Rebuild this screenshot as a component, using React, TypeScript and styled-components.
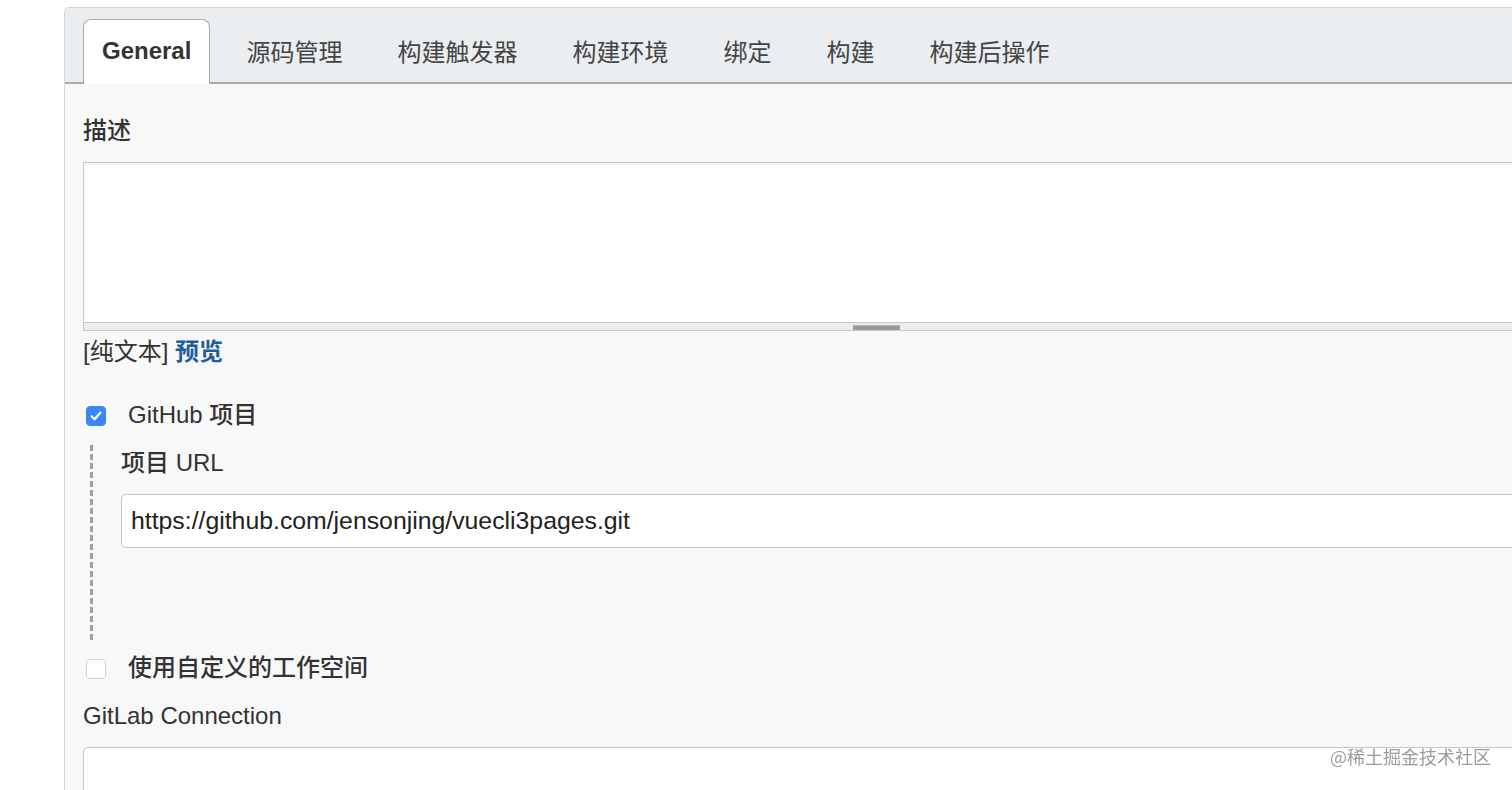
import styled, { createGlobalStyle } from "styled-components";

const GlobalStyle = createGlobalStyle`
    html, body {
        margin: 0;
        padding: 0;
        background: #ffffff;
        overflow: hidden;
    }
    body {
        font-family: "Liberation Sans", "Noto Sans CJK SC", sans-serif;
        color: #333;
    }
`;

const Page = styled.div`
    padding: 7px 0 0 64px;
    height: 790px;
    box-sizing: border-box;
`;

const Panel = styled.div`
    width: 1700px;
    height: 100%;
    background: #f8f8f9;
    border-left: 1px solid #d4d6d8;
    border-top: 1px solid #d4d6d8;
    border-radius: 5px 0 0 0;
    box-sizing: border-box;
    overflow: hidden;
`;

const TabBar = styled.div`
    display: flex;
    align-items: flex-end;
    height: 76px;
    padding-left: 18px;
    background: #eaeef1;
    border-bottom: 2px solid #a6abaf;
    box-sizing: border-box;
`;

const Tab = styled.div<{ $active?: boolean }>`
    display: flex;
    align-items: center;
    height: 65px;
    padding: 0 18px 3px;
    margin-right: 17px;
    margin-bottom: -2px;
    box-sizing: border-box;
    font-size: 24px;
    color: ${(p) => (p.$active ? "#333" : "#444")};
    font-weight: ${(p) => (p.$active ? 700 : 400)};
    background: ${(p) => (p.$active ? "#ffffff" : "transparent")};
    border: 1.5px solid ${(p) => (p.$active ? "#a6abaf" : "transparent")};
    border-bottom: none;
    border-radius: 8px 8px 0 0;
`;

const Content = styled.div`
    padding: 32px 0 0 18px;
`;

const Label = styled.div<{ $top?: number }>`
    font-size: 24px;
    line-height: 30px;
    font-weight: 500;
    color: #333;
    margin-top: ${(p) => p.$top ?? 0}px;
`;

const TextArea = styled.div`
    width: 1586px;
    height: 161px;
    margin-top: 16px;
    background: #fff;
    border: 1px solid #c6c8ca;
    box-shadow: inset 0 2px 2px rgba(0, 0, 0, 0.06);
    box-sizing: border-box;
`;

const Grippie = styled.div`
    width: 1586px;
    height: 8px;
    background: #ececec;
    border: 1px solid #c8c8c8;
    border-top: none;
    box-sizing: border-box;
    display: flex;
    justify-content: center;
    align-items: flex-start;
`;

const Grip = styled.div`
    width: 47px;
    height: 4px;
    margin-top: 2px;
    background: #9a9a9a;
    border-top: 1px solid #b5b5b5;
`;

const Hint = styled.div`
    margin-top: 6px;
    font-size: 24px;
    line-height: 30px;
    color: #333;
`;

const Link = styled.a`
    color: #1f5f9b;
    font-weight: 700;
    text-decoration: none;
`;

const CheckRow = styled.div<{ $top: number }>`
    display: flex;
    align-items: center;
    gap: 22px;
    height: 30px;
    margin-top: ${(p) => p.$top}px;
    padding-left: 3px;
    font-size: 24px;
    font-weight: 500;
    line-height: 30px;
    color: #333;
`;

const Box = styled.span<{ $checked?: boolean }>`
    display: inline-flex;
    align-items: center;
    justify-content: center;
    width: 20px;
    height: 20px;
    margin-top: 2px;
    border-radius: 4px;
    box-sizing: border-box;
    background: ${(p) => (p.$checked ? "#3a86f5" : "#ffffff")};
    border: 1px solid ${(p) => (p.$checked ? "#3a86f5" : "#cfd1d3")};
`;

const Nested = styled.div`
    margin: 15px 0 0 7px;
    padding: 3px 0 92px 28px;
    border-left: 3px dashed #a0a0a0;
`;

const Input = styled.div<{ $top?: number; $height: number }>`
    display: flex;
    align-items: center;
    width: 1600px;
    height: ${(p) => p.$height}px;
    margin-top: ${(p) => p.$top ?? 16}px;
    padding-left: 9px;
    background: #fff;
    border: 1px solid #c4c6c8;
    border-radius: 5px;
    box-sizing: border-box;
    font-size: 24.8px;
    color: #222;
`;

const BigBox = styled(Input)`
    align-items: flex-start;
`;

const Watermark = styled.div`
    position: fixed;
    left: 1330px;
    top: 744px;
    font-size: 18px;
    line-height: 24px;
    color: #9c9c9c;
    font-family: "Noto Sans CJK SC", sans-serif;
    text-shadow: 0 0 2px #fff;
`;

const tabs = ["General", "源码管理", "构建触发器", "构建环境", "绑定", "构建", "构建后操作"];

export default function App() {
    return (
        <Page>
            <GlobalStyle />
            <Panel>
                <TabBar>
                    {tabs.map((t, i) => (
                        <Tab key={t} $active={i === 0}>
                            {t}
                        </Tab>
                    ))}
                </TabBar>
                <Content>
                    <Label>描述</Label>
                    <TextArea />
                    <Grippie>
                        <Grip />
                    </Grippie>
                    <Hint>
                        [纯文本] <Link href="#">预览</Link>
                    </Hint>

                    <CheckRow $top={33}>
                        <Box $checked>
                            <svg width="14" height="14" viewBox="0 0 14 14">
                                <path
                                    d="M2.5 7.3 L5.6 10.3 L11.5 3.6"
                                    fill="none"
                                    stroke="#fff"
                                    strokeWidth="2.2"
                                    strokeLinecap="round"
                                    strokeLinejoin="round"
                                />
                            </svg>
                        </Box>
                        GitHub 项目
                    </CheckRow>
                    <Nested>
                        <Label>项目 URL</Label>
                        <Input $height={54}>https://github.com/jensonjing/vuecli3pages.git</Input>
                    </Nested>

                    <CheckRow $top={13}>
                        <Box />
                        使用自定义的工作空间
                    </CheckRow>

                    <Label $top={18}>GitLab Connection</Label>
                    <BigBox $height={120} />
                </Content>
            </Panel>
            <Watermark>@稀土掘金技术社区</Watermark>
        </Page>
    );
}
